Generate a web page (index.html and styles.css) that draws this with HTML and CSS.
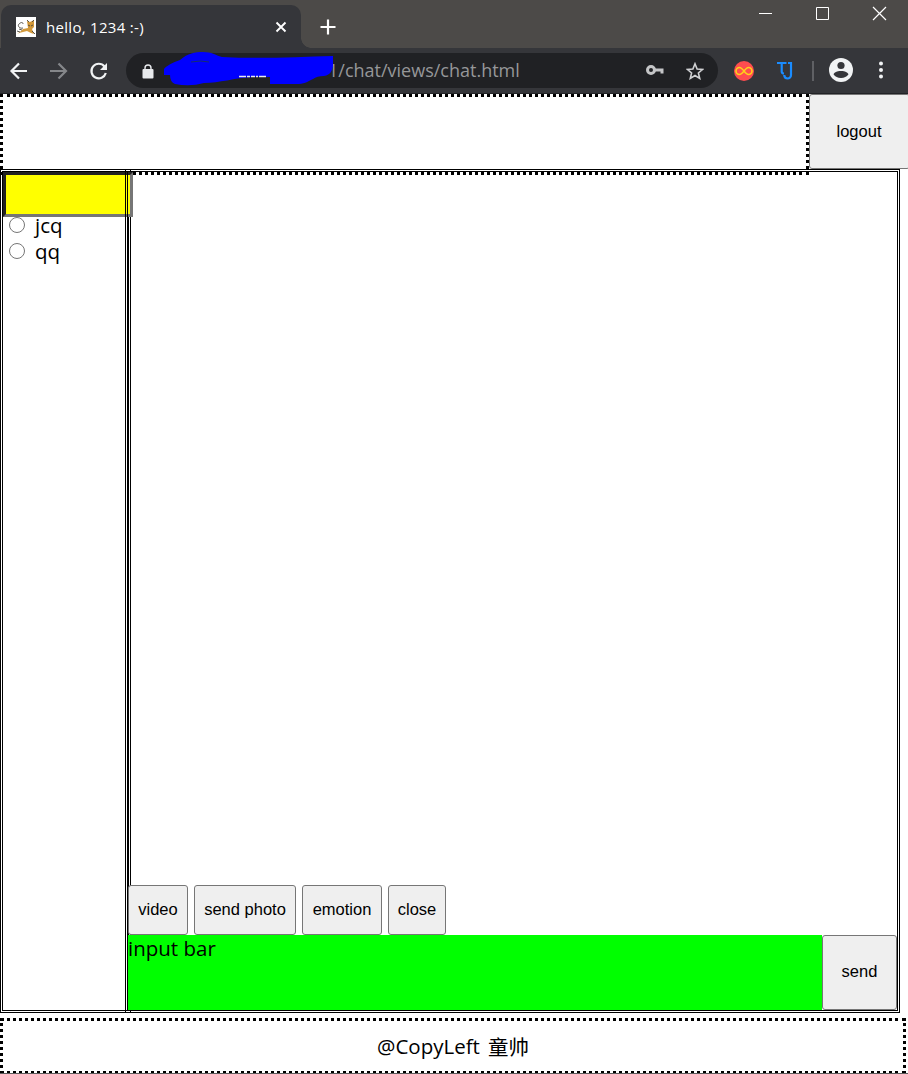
FILE: index.html
```html
<!DOCTYPE html>
<html lang="en">
<head>
<meta charset="utf-8">
<title>hello, 1234 :-)</title>
<link rel="stylesheet" href="styles.css">
</head>
<body>
<div class="titlebar">
  <div class="tab">
    <svg class="favicon" width="20" height="20" viewBox="0 0 20 20"><path fill="#fff" d="M0 0h20v20H0z"/><path d="M1 17l4-3 2-2 5-1-1-7 3 1 4-2v7l-2 2 2 5-3-1-4-2-4 1-4 1z" fill="#d3993a"/><path d="M7 11C4 12 1 9 3 7s4-2 4 0M1 14l3 1M11 3l2 2M18 3l-2 2M12 8l2 1M15 9l2-1M16 14l3 3M3 12l3 1" stroke="#4a463e" stroke-width=".9" fill="none"/></svg>
    <span class="tab-title">hello, 1234 :-)</span>
    <svg class="tab-close" width="12" height="12" viewBox="0 0 12 12"><path d="M1.500 1.500l9 9M10.500 1.500l-9 9" stroke="#fff" stroke-width="1.900"/></svg>
  </div>
  <svg class="newtab" width="16" height="16" viewBox="0 0 16 16"><path d="M8 .5v15M.5 8h15" stroke="#fff" stroke-width="2.200"/></svg>
  <svg class="window-controls" width="130" height="16" viewBox="0 0 130 16" fill="none" stroke="#fff"><path d="M1 7.500h13M58.500 1.500h12v12h-12z"/><path d="M115 1l13 13M128 1l-13 13" stroke-width="1.200"/></svg>
</div>
<div class="toolbar">
  <svg class="nav" width="110" height="24" viewBox="0 0 110 24" fill="none" stroke-width="2.200"><path d="M27 12H12M19 4.500L11.500 12l7.500 7.500" stroke="#f1f3f4"/><path d="M50 12h15.500M58.500 4.500L66 12l-7.500 7.500" stroke="#85878a"/><path d="M104.500 7.500A7.300 7.300 0 1 0 105.800 14" stroke="#f1f3f4"/><path d="M107 4v7h-7z" fill="#f1f3f4"/></svg>
  <div class="address">
    <svg class="lock" width="12" height="15" viewBox="0 0 12 15"><rect x=".5" y="5" width="11" height="9.500" rx="1" fill="#e8eaed"/><path d="M3 6V4a3 3 0 0 1 6 0v2" fill="none" stroke="#e8eaed" stroke-width="1.400"/></svg>
    <span class="url">1/chat/views/chat.html</span>
    <svg class="key" width="20" height="12" viewBox="0 0 20 12"><circle cx="6" cy="6" r="3.500" fill="none" stroke="#c4c5c7" stroke-width="3"/><path d="M10 4.500h8.500v5h-3v-2H10z" fill="#c4c5c7"/></svg>
    <svg class="star" width="18" height="18" viewBox="0 0 18 18"><path d="M9 1.800l2.100 5.200 5.500.4-4.200 3.600 1.300 5.400L9 13.500l-4.700 2.900L5.600 11 1.400 7.400l5.500-.4z" fill="none" stroke="#d0d1d3" stroke-width="1.600"/></svg>
    <svg class="scribble" width="172" height="36" viewBox="0 0 172 36"><path d="M1 18Q5 13 17 9C25 2 32 1 40 1c9 0 12 3 19 5 37 2 75 0 111-1v10c-1 4-2 9-9 10q-7 0-11 3c-6 3-9 5-17 5H107v-7H91C70 27 57 32 41 32q-14 4-29 1-5-2-5-9H1z" fill="#00f"/><path d="M28 11q10-2 18 0" fill="none" stroke="#173069"/><path d="M76 25.500h27" stroke="#e8eaed" stroke-width="1.300" stroke-dasharray="7 1 3 1 4 1 2 1"/></svg>
  </div>
  <svg class="infinity" width="20" height="20" viewBox="0 0 20 20"><circle cx="10" cy="10" r="10" fill="#ff4d4f"/><path d="M10 10C8 7.500 7 6.500 5.500 6.500a3.500 3.500 0 0 0 0 7C7 13.500 8 12.500 10 10s3-3.500 4.500-3.500a3.500 3.500 0 0 1 0 7C13 13.500 12 12.500 10 10z" fill="none" stroke="#ffd21a" stroke-width="1.600"/></svg>
  <svg class="tj" width="16" height="19" viewBox="0 0 16 19"><path d="M0 2h9.500M4.700 2v8.500q0 2 2.300 2M11 2h3v12a3.400 3.400 0 0 1-3.400 3.500q-3.200 0-3.400-3.500" fill="none" stroke="#1a8cff" stroke-width="2.200"/></svg>
  <span class="divider"></span>
  <svg class="avatar" width="24" height="24" viewBox="0 0 24 24"><circle cx="12" cy="12" r="12" fill="#f1f3f4"/><circle cx="12" cy="7.500" r="3.600" fill="#35363a"/><path d="M4.500 16.200C6 13.500 10 13 12 13s6 .5 7.500 3.200A9 9 0 0 1 12 20a9 9 0 0 1-7.500-3.800z" fill="#35363a"/></svg>
  <svg class="dots" width="4" height="18" viewBox="0 0 4 18" fill="#f1f3f4"><circle cx="2" cy="2.500" r="2"/><circle cx="2" cy="9" r="2"/><circle cx="2" cy="15.500" r="2"/></svg>
</div>
<header class="top">
  <div class="banner"></div>
  <button class="btn logout">logout</button>
</header>
<main class="main">
  <aside class="friends">
    <div class="me"></div>
    <label class="friend"><input type="radio" name="friend"><span>jcq</span></label>
    <label class="friend"><input type="radio" name="friend"><span>qq</span></label>
  </aside>
  <section class="panel">
    <div class="actions">
      <button class="btn video">video</button>
      <button class="btn photo">send photo</button>
      <button class="btn emotion">emotion</button>
      <button class="btn close">close</button>
    </div>
    <div class="compose">
      <div class="input"><span>input bar</span></div>
      <button class="btn send">send</button>
    </div>
  </section>
</main>
<footer class="foot"><span class="copy">@CopyLeft</span><span class="name">童帅</span></footer>
</body>
</html>
```
FILE: styles.css
```css
* { box-sizing: border-box; }
body { margin: 0; height: 1074px; overflow: hidden; background: #fff; color: #000; font-family: "Open Sans", "Noto Sans CJK SC", sans-serif; }
svg { display: block; flex: none; }

.titlebar { height: 48px; display: flex; background: #4c4a48; }
.tab { width: 300px; height: 43px; margin: 5px 0 0 1px; padding-left: 15px; display: flex; align-items: center; background: #35363a; border-radius: 10px 10px 0 0; position: relative; }
.tab::after { content: ""; position: absolute; left: 100%; bottom: 0; width: 10px; height: 10px; background: radial-gradient(circle at 100% 0, transparent 9.5px, #35363a 10px); }
.tab-title { width: 229px; margin-left: 10px; color: #fff; font-size: 15px; letter-spacing: 0.3px; white-space: nowrap; }
.newtab { margin: 19px 0 0 19px; }
.window-controls { margin: 6px 20px 0 auto; }

.toolbar { height: 46px; display: flex; align-items: center; background: #35363a; border-bottom: 1px solid #222326; }
.nav { margin-right: 16px; }
.address { width: 592px; height: 35px; padding-left: 16px; display: flex; align-items: center; background: #202124; border-radius: 18px; position: relative; }
.lock { margin-top: 1px; }
.url { width: 317px; margin: -2px 0 0 174px; color: #969799; font-size: 18px; white-space: nowrap; }
.key { margin-top: -1px; }
.star { margin-left: 21px; }
.scribble { position: absolute; left: 37px; top: -2px; }
.infinity { margin-left: 16px; }
.tj { margin-left: 23px; }
.divider { width: 2px; height: 20px; margin: 0 16px 0 19px; background: #5f6064; }
.avatar { margin: -1px 0 0 -1px; }
.dots { margin: -1px 0 0 26px; }

.top { height: 81px; display: flex; align-items: flex-start; }
.banner { width: 809px; height: 81px; flex: none; border: 3px dotted #000; }
.btn { flex: none; padding: 0; border: 1px solid #767676; border-radius: 3px; background: #efefef; color: #000; font: 16.5px "Liberation Sans", Arial, sans-serif; white-space: nowrap; }
.logout { width: 101px; height: 75px; padding-right: 1px; }

.main { width: 900px; height: 844px; margin-top: -6px; display: flex; position: relative; }
.friends { width: 131px; flex: none; border: 3px double #000; }
.me { width: 130px; height: 45px; background: #ff0; border: 3px solid; border-color: #222 #767676 #767676 #222; }
.friend { height: 26px; display: flex; align-items: center; font-size: 20.5px; }
.friend input { width: 16px; height: 16px; margin: 0 10px 0 6px; }
.friend:first-of-type { margin-top: -5px; }
.panel { width: 775px; margin-left: -6px; flex: none; display: flex; flex-direction: column; justify-content: flex-end; border: 3px double #000; position: relative; }
.actions { height: 50px; display: flex; gap: 6px; }
.actions .btn { padding-bottom: 2px; }
.video { width: 60px; }
.photo { width: 102px; }
.emotion { width: 80px; }
.close { width: 58px; }
.compose { height: 75px; display: flex; }
.input { width: 694px; background: #0f0; font-size: 20.5px; line-height: 27px; }
.send { width: 75px; padding-bottom: 2px; }

.foot { width: 906px; height: 56px; margin-top: 5px; display: flex; align-items: center; justify-content: center; gap: 8px; border: 3px dotted #000; font-size: 20.5px; position: relative; }
.foot::after { content: ""; position: absolute; left: -3px; right: -5px; bottom: -3px; height: 1px; background: #5c5c5c; }
```
